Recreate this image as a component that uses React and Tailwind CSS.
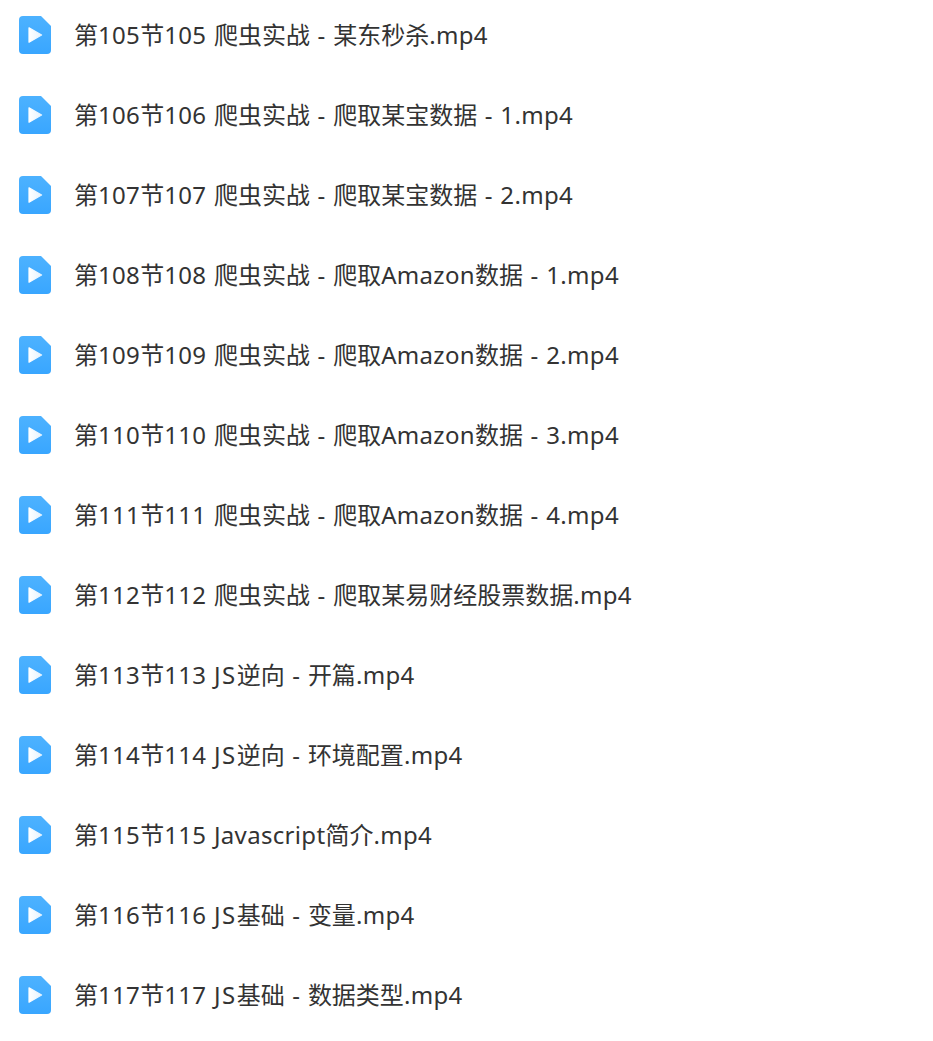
const files = [
  "第105节105 爬虫实战 - 某东秒杀.mp4",
  "第106节106 爬虫实战 - 爬取某宝数据 - 1.mp4",
  "第107节107 爬虫实战 - 爬取某宝数据 - 2.mp4",
  "第108节108 爬虫实战 - 爬取Amazon数据 - 1.mp4",
  "第109节109 爬虫实战 - 爬取Amazon数据 - 2.mp4",
  "第110节110 爬虫实战 - 爬取Amazon数据 - 3.mp4",
  "第111节111 爬虫实战 - 爬取Amazon数据 - 4.mp4",
  "第112节112 爬虫实战 - 爬取某易财经股票数据.mp4",
  "第113节113 JS逆向 - 开篇.mp4",
  "第114节114 JS逆向 - 环境配置.mp4",
  "第115节115 Javascript简介.mp4",
  "第116节116 JS基础 - 变量.mp4",
  "第117节117 JS基础 - 数据类型.mp4",
];

const VideoIcon = () => (
  <svg width="32" height="38" viewBox="0 0 32 38" className="shrink-0">
    <defs>
      <linearGradient id="fileBlue" x1="0" y1="0" x2="0" y2="1">
        <stop offset="0" stopColor="#4db2ff" />
        <stop offset="1" stopColor="#39a6ff" />
      </linearGradient>
      <linearGradient id="playFade" x1="0" y1="0" x2="1" y2="0">
        <stop offset="0" stopColor="#ffffff" />
        <stop offset="1" stopColor="#e4f3ff" />
      </linearGradient>
    </defs>
    <path
      d="M4 0H22L32 10V34A4 4 0 0 1 28 38H4A4 4 0 0 1 0 34V4A4 4 0 0 1 4 0Z"
      fill="url(#fileBlue)"
    />
    <path d="M10 11.8L22.6 19L10 26.2Z" fill="url(#playFade)" stroke="url(#playFade)" strokeWidth="1.2" strokeLinejoin="round" />
  </svg>
);

// latin runs sit a bit tighter in Noto than in the reference, cjk stays as is
const FileName = ({ name }) => (
  <span className="text-2xl whitespace-nowrap [word-spacing:1px]">
    {name.split(/([\u4e00-\u9fff]+|JS)/).map((part, i) => {
      if (part === "JS") return <span key={i} className="tracking-[1.5px]">{part}</span>;
      return i % 2 === 1 ? (
        <span key={i}>{part}</span>
      ) : (
        <span key={i} className="tracking-[0.33px]">{part}</span>
      );
    })}
  </span>
);

const App = () => {
  return (
    <div className="min-h-[1041px] bg-white pt-4 pl-[19px] font-['Noto_Sans','Noto_Sans_CJK_SC',sans-serif] text-[#333333]">
      <ul className="flex flex-col gap-[42px]">
        {files.map((name) => (
          <li key={name} className="flex h-[38px] items-center gap-[23px]">
            <VideoIcon />
            <FileName name={name} />
          </li>
        ))}
      </ul>
    </div>
  );
};

export default App;
